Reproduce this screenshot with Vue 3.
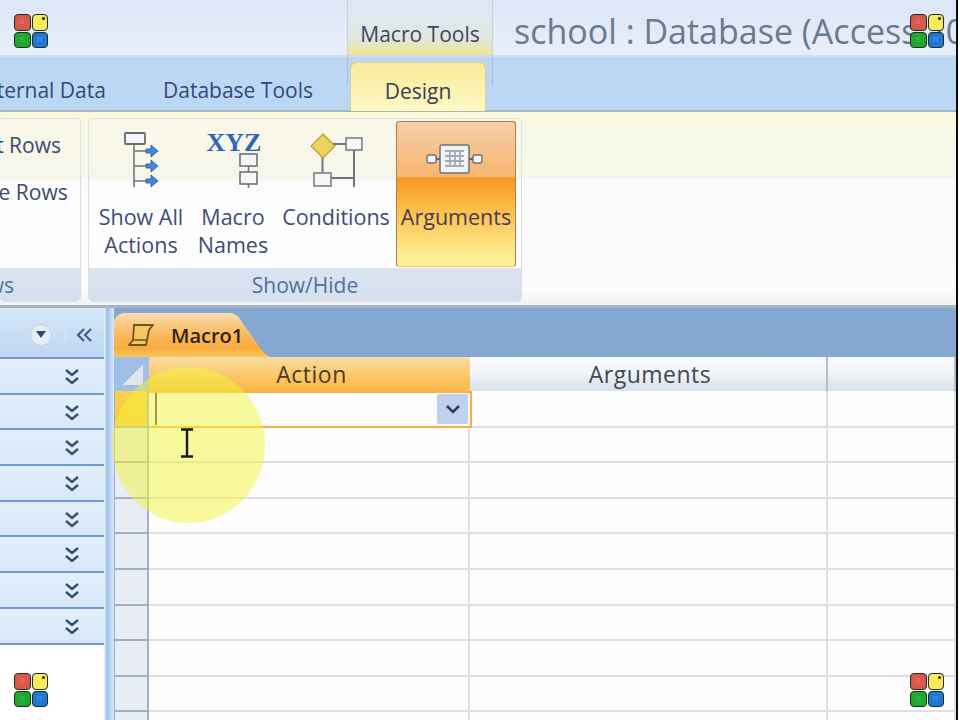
<template>
  <div class="app">
    <div class="screen">
      <div class="title-bar">
        <div class="context-tab">Macro Tools</div>
        <div class="doc-title">school : Database (Access 2007)</div>
      </div>

      <div class="tab-row">
        <span class="tab tab-external">External Data</span>
        <span class="tab tab-tools">Database Tools</span>
        <span class="tab tab-design">Design</span>
      </div>

      <div class="ribbon">
        <div class="group group-rows">
          <div class="group-body">
            <span class="row-cmd">Insert Rows</span>
            <span class="row-cmd">Delete Rows</span>
          </div>
          <div class="group-label"><span>Rows</span></div>
        </div>
        <div class="group group-show">
          <div class="group-body show-body">
            <div class="cmd cmd-all">
              <svg width="44" height="62" viewBox="0 0 44 62">
                <path d="M15 15V58M15 22H27M15 37H27M15 52H27" stroke="#70767d" stroke-width="1.6" fill="none" />
                <rect x="6" y="4" width="20" height="11" fill="#f4f5f6" stroke="#666d75" stroke-width="1.8" rx="1" />
                <path d="M27 20h5v-4l7 6-7 6v-4h-5zM27 35h5v-4l7 6-7 6v-4h-5zM27 50h5v-4l7 6-7 6v-4h-5z" fill="#3d8ae0" stroke="#24589c" stroke-width=".8" />
              </svg>
              <span>Show All<br>Actions</span>
            </div>
            <div class="cmd cmd-names">
              <svg width="56" height="62" viewBox="0 0 56 62">
                <text x="29" y="22" text-anchor="middle" class="xyz">XYZ</text>
                <path d="M43.5 37v6M43.5 55v4" stroke="#6e747b" stroke-width="1.6" />
                <rect x="35" y="25" width="17" height="12" fill="#f4f5f6" stroke="#6e747b" stroke-width="1.6" />
                <rect x="35" y="43" width="17" height="12" fill="#f4f5f6" stroke="#6e747b" stroke-width="1.6" />
              </svg>
              <span>Macro<br>Names</span>
            </div>
            <div class="cmd cmd-cond">
              <svg width="56" height="62" viewBox="0 0 56 62">
                <path d="M15 15H40M46 20V58M14.500 28V45M23 49H46" stroke="#6f757c" stroke-width="2" fill="none" />
                <path d="M15 5 27 17 15 29 3 17z" fill="#ead35e" stroke="#b4a02f" stroke-width="1.2" />
                <rect x="38" y="9" width="16" height="12" fill="#f5f6f7" stroke="#7b8188" stroke-width="1.6" />
                <rect x="6" y="44" width="17" height="13" fill="#f5f6f7" stroke="#7b8188" stroke-width="1.6" />
              </svg>
              <span>Conditions</span>
            </div>
            <div class="cmd cmd-args">
              <svg width="60" height="32" viewBox="0 0 60 32">
                <path d="M10 15H14M43 15H47" stroke="#656a70" stroke-width="2" />
                <rect x="1" y="11" width="9" height="8" rx="2" fill="#f6f6f6" stroke="#6d7278" stroke-width="1.4" />
                <rect x="47" y="11" width="9" height="8" rx="2" fill="#f6f6f6" stroke="#6d7278" stroke-width="1.4" />
                <rect x="14" y="1" width="29" height="28" rx="2" fill="#f3f3f5" stroke="#6d7278" stroke-width="1.5" />
                <path d="M19 7H38M19 12H38M19 17H38M19 22H38M24 7V23M29 7V23M34 7V23" stroke="#a4abb8" stroke-width="1.8" />
              </svg>
              <span>Arguments</span>
            </div>
          </div>
          <div class="group-label">Show/Hide</div>
        </div>
      </div>

      <div class="work">
        <div class="nav">
          <div class="nav-head">
            <span class="nav-drop">
              <svg width="10" height="7" viewBox="0 0 10 7"><path d="M0 0H10L5 7z" fill="#2f4a6e" /></svg>
            </span>
            <svg class="nav-collapse" width="17" height="14" viewBox="0 0 17 14">
              <path d="M8 1 2 7l6 6M15 1 9 7l6 6" fill="none" stroke="#3f5a80" stroke-width="2" />
            </svg>
          </div>
          <div v-for="n in 8" :key="n" class="nav-row">
            <svg width="14" height="16" viewBox="0 0 14 16">
              <path d="M1 1l6 5 6-5M1 9l6 5 6-5" fill="none" stroke="#34506f" stroke-width="2.4" />
            </svg>
          </div>
        </div>

        <div class="splitter"></div>

        <div class="doc">
          <div class="doc-tabs">
            <div class="doc-tab">
              <svg width="28" height="26" viewBox="0 0 28 26">
                <path d="M7 3H26L22 8 19 23H2L6 18z" fill="#f0c860" stroke="#6d5320" stroke-width="1.8" stroke-linejoin="round" />
                <path d="M6 18H20" stroke="#6d5320" stroke-width="1.4" />
              </svg>
              <span>Macro1</span>
            </div>
          </div>
          <div class="sheet">
            <div class="corner"></div>
            <div class="head head-action">Action</div>
            <div class="head">Arguments</div>
            <div class="head"></div>
            <template v-for="r in rowCount" :key="r">
              <div :class="['row-head', { current: r === 1 }]"></div>
              <div :class="['cell', { 'cell-action': r === 1 }]">
                <template v-if="r === 1">
                  <span class="caret"></span>
                  <span class="combo">
                    <svg width="14" height="9" viewBox="0 0 14 9"><path d="M1 1l6 6 6-6" fill="none" stroke="#26405f" stroke-width="2.6" /></svg>
                  </span>
                </template>
              </div>
              <div class="cell"></div>
              <div class="cell"></div>
            </template>
          </div>
        </div>
      </div>
    </div>

    <div class="edge"></div>

    <!-- screen recorder highlight and cursor -->
    <div class="spot"></div>
    <svg class="ibeam" width="14" height="30" viewBox="0 0 14 30">
      <path d="M1 1.500H13M1 28.500H13M7 2V28" fill="none" stroke="#1a1a1a" stroke-width="2.400" />
    </svg>

    <!-- watermark logos -->
    <div v-for="pos in logos" :key="pos" :class="['logo', pos]">
      <i class="red">B</i><i class="yellow"></i><i class="green">S</i><i class="blue">R</i>
    </div>
  </div>
</template>

<script setup>
const rowCount = 10
const logos = ['tl', 'tr', 'bl', 'br']
</script>

<style>
html, body {
  margin: 0;
  background: #fff;
}
</style>

<style scoped>
.app {
  position: relative;
  width: 960px;
  height: 720px;
  overflow: hidden;
  display: flex;
  font-family: "Open Sans", "Noto Sans", sans-serif;
  color: #3b4a70;
  background: #fff;
}

.screen {
  width: 956px;
  flex: none;
  display: flex;
  flex-direction: column;
  overflow: hidden;
}

.edge {
  width: 2px;
  flex: none;
  background: #0a0a0a;
}

.title-bar {
  height: 55px;
  flex: none;
  display: flex;
  padding-left: 347px;
  background: linear-gradient(#dbe6f6, #e3ebf8 60%, #e9eff9);
  border-bottom: 2px solid #cfdcee;
  box-sizing: content-box;
}

.context-tab {
  width: 146px;
  flex: none;
  text-align: center;
  font-size: 21px;
  line-height: 68px;
  height: 55px;
  white-space: nowrap;
  background: linear-gradient(rgba(223, 230, 220, 0) 15%, #dfe6dc 70%, #f2e68e);
  border-left: 1px solid #c4d2e0;
  border-right: 1px solid #c4d2e0;
  box-sizing: border-box;
  color: #3c4668;
}

.doc-title {
  margin-left: 21px;
  font-size: 34px;
  line-height: 62px;
  color: #6c7a8d;
  white-space: nowrap;
}

.tab-row {
  height: 55px;
  flex: none;
  display: flex;
  background:
    linear-gradient(#a4bfdc, #a4bfdc) 347px 0 / 1px 28px no-repeat,
    linear-gradient(#a4bfdc, #a4bfdc) 492px 0 / 1px 28px no-repeat,
    #bcd7f4;
  border-bottom: 2px solid #a9b5b8;
  box-sizing: border-box;
}

.tab {
  font-size: 21px;
  line-height: 66px;
  white-space: nowrap;
  color: #35467a;
}

.tab-external {
  margin-left: -26px;
  width: 189px;
  flex: none;
}

.tab-tools {
  width: 187px;
  flex: none;
}

.tab-design {
  width: 134px;
  height: 48px;
  flex: none;
  margin-top: 5px;
  line-height: 56px;
  text-align: center;
  border-radius: 7px 7px 0 0;
  background: linear-gradient(#f9eb9c, #fdf8c4);
  border: 1px solid #dcd18a;
  border-bottom: none;
  box-sizing: content-box;
  color: #3f3c55;
}

.ribbon {
  height: 196px;
  flex: none;
  display: flex;
  gap: 7px;
  padding: 6px 0 3px;
  box-sizing: border-box;
  background: linear-gradient(#fbf8d8, #f8f8e8 10%, #f7f7e8 33%, #efefee 34%, #f0f0ee 64px, #fafafa 65px, #fbfbfb 92%, #eef1f5);
  border-bottom: 3px solid #a6b4c4;
}

.group {
  display: flex;
  flex-direction: column;
  border: 1px solid #dcdfe0;
  border-radius: 5px;
  box-sizing: border-box;
  overflow: hidden;
  background: linear-gradient(#f9f8e8, #f6f5ea 33%, #fcfcfd 34%, #fff);
}

.group-rows {
  width: 82px;
  margin-left: -1px;
}

.group-show {
  width: 434px;
}

.group-body {
  flex: 1;
  min-height: 0;
}

.group-label {
  height: 33px;
  flex: none;
  text-align: center;
  font-size: 21px;
  line-height: 35px;
  color: #52719a;
  background: linear-gradient(#dae4f1, #d5e0ef);
  white-space: nowrap;
}

.group-rows .group-body {
  display: flex;
  flex-direction: column;
  align-items: flex-start;
  gap: 20px;
  padding-top: 13px;
}

.group-rows .group-label {
  display: flex;
  justify-content: flex-end;
  padding-right: 66px;
}

.row-cmd {
  font-size: 21px;
  line-height: 27px;
  white-space: nowrap;
  margin-left: -53px;
}

.show-body {
  display: flex;
}

.cmd {
  flex: none;
  display: flex;
  flex-direction: column;
  align-items: center;
  font-size: 21.5px;
  line-height: 28px;
  text-align: center;
  white-space: nowrap;
  color: #3f4c78;
  padding-top: 10px;
  box-sizing: border-box;
}

.cmd svg {
  flex: none;
  margin-bottom: 12px;
}

.cmd-all {
  width: 104px;
}

.cmd-names {
  width: 80px;
}

.cmd-cond {
  width: 114px;
  margin-left: 6px;
}

.cmd-args {
  width: 120px;
  height: 146px;
  margin: 2px 0 0 3px;
  padding-top: 22px;
  border: 1px solid #a8824a;
  border-bottom-color: #f0d050;
  border-radius: 3px;
  background: linear-gradient(#f6cfa6, #f7b470 38%, #f8961e 39%, #fbc04e 62%, #fde98c 90%, #fdf09c);
  color: #4a3b50;
}

.cmd-args svg {
  margin-bottom: 27px;
}

.xyz {
  font: bold 26px "Liberation Serif", serif;
  fill: #2c68b8;
}

.work {
  flex: 1;
  min-height: 0;
  display: flex;
}

.nav {
  width: 104px;
  flex: none;
  background: #fff;
}

.nav-head {
  height: 51px;
  display: flex;
  align-items: center;
  justify-content: flex-end;
  box-sizing: border-box;
  padding: 4px 11px 0 0;
  background: linear-gradient(#d6e7f9, #bdd6f2);
  border-bottom: 2px solid #6d97cc;
}

.nav-drop {
  width: 22px;
  height: 22px;
  margin-right: 12px;
  display: flex;
  align-items: center;
  justify-content: center;
  border-radius: 50%;
  background: #e6edf6;
  border: 1px solid #c5d0de;
  box-sizing: border-box;
}

.nav-collapse {
  padding-left: 11px;
  border-left: 1px solid #d7e5f5;
}

.nav-row {
  height: 35.7px;
  display: flex;
  align-items: center;
  justify-content: flex-end;
  padding: 2px 25px 0 0;
  box-sizing: border-box;
  background: linear-gradient(#e2eefb, #d8e7f8);
  border-bottom: 2px solid #6f9bd4;
}

.splitter {
  width: 10px;
  flex: none;
  background: linear-gradient(90deg, #e6eff9 10%, #9cc3ee 25%, #b7d2f2 60%, #dce9f8);
}

.doc {
  flex: 1;
  min-width: 0;
  display: flex;
  flex-direction: column;
  background: #fff;
}

.doc-tabs {
  height: 49px;
  flex: none;
  background: #84a8d2;
  box-sizing: border-box;
  display: flex;
  padding-top: 5px;
}

.doc-tab {
  width: 156px;
  height: 44px;
  padding-left: 13px;
  display: flex;
  align-items: center;
  gap: 16px;
  box-sizing: border-box;
  font-size: 20px;
  font-weight: 600;
  color: #2e2312;
  background: linear-gradient(#fbdcae, #f9b95c 50%, #f8ab3e 80%, #f7c562);
  clip-path: polygon(0 7px, 4px 2px, 9px 0, 118px 0, 124px 3px, 130px 12px, 150px 40px, 156px 44px, 0 44px);
}

.sheet {
  flex: 1;
  min-height: 0;
  overflow: hidden;
  display: grid;
  grid-template-columns: 35px 321px 358px 128px;
  grid-template-rows: 34px 36.6px repeat(9, 35.6px);
}

.corner {
  background:
    linear-gradient(135deg, transparent 50%, #e2e6eb 50%) 9px 8px / 20px 20px no-repeat,
    #a0bfe8;
}

.head {
  display: flex;
  align-items: center;
  justify-content: center;
  padding-left: 4px;
  font-size: 23px;
  letter-spacing: .5px;
  color: #3e4a52;
  background: linear-gradient(#fbfcfd, #f2f4f7 45%, #d8dfe8);
  border-right: 2px solid #b4bfce;
  box-sizing: border-box;
}

.head-action {
  color: #4c3c22;
  background: linear-gradient(#f8dca6, #fbca6c 50%, #f8b84a);
  border-right: none;
}

.row-head {
  background: #e8edf5;
  border-left: 1px solid #9eb1c6;
  border-bottom: 2px solid #9eb1c6;
  border-right: 2px solid #9eb1c6;
  box-sizing: border-box;
}

.row-head.current {
  background: linear-gradient(#fbcf4a, #fbc73e);
}

.cell {
  background: #fdfdfd;
  border-bottom: 2px solid #dadfe8;
  border-right: 2px solid #dadfe8;
  box-sizing: border-box;
}

.cell-action {
  position: relative;
  border: 2px solid #f5b04c;
  border-left: none;
  margin-right: -2px;
  display: flex;
  align-items: center;
  padding-left: 6px;
}

.caret {
  width: 2px;
  height: 32px;
  background: #3c4230;
}

.combo {
  position: absolute;
  right: 2px;
  top: 1px;
  width: 31px;
  height: 30px;
  display: flex;
  align-items: center;
  justify-content: center;
  background: #c0d0ee;
  border-radius: 2px;
}

.spot {
  position: absolute;
  left: 112px;
  top: 367px;
  width: 153px;
  height: 156px;
  border-radius: 50%;
  background: rgba(243, 243, 60, 0.5);
  pointer-events: none;
}

.ibeam {
  position: absolute;
  left: 180px;
  top: 428px;
}

.logo {
  position: absolute;
  width: 34px;
  height: 34px;
  display: grid;
  grid-template-columns: 16.5px 16.5px;
  grid-template-rows: 16.5px 16.5px;
  gap: 1px;
}

.logo i {
  position: relative;
  display: flex;
  align-items: center;
  justify-content: center;
  border: 1.5px solid #1e2a22;
  border-radius: 4px;
  box-sizing: border-box;
  font: 8px/1 "Liberation Sans", sans-serif;
}

.logo .red { background: #d9584a; color: #e4786a; }
.logo .yellow { background: #f7ea5c; }
.logo .green { background: #1fa82f; color: #46c050; }
.logo .blue { background: #1f78d4; color: #4c98e6; }

.logo .yellow::after {
  content: "";
  position: absolute;
  top: 2px;
  right: 2px;
  width: 3px;
  height: 3px;
  border-radius: 50%;
  background: #222;
}

.tl { left: 14px; top: 14px; }
.tr { left: 910px; top: 14px; }
.bl { left: 14px; top: 673px; }
.br { left: 910px; top: 673px; }
</style>
